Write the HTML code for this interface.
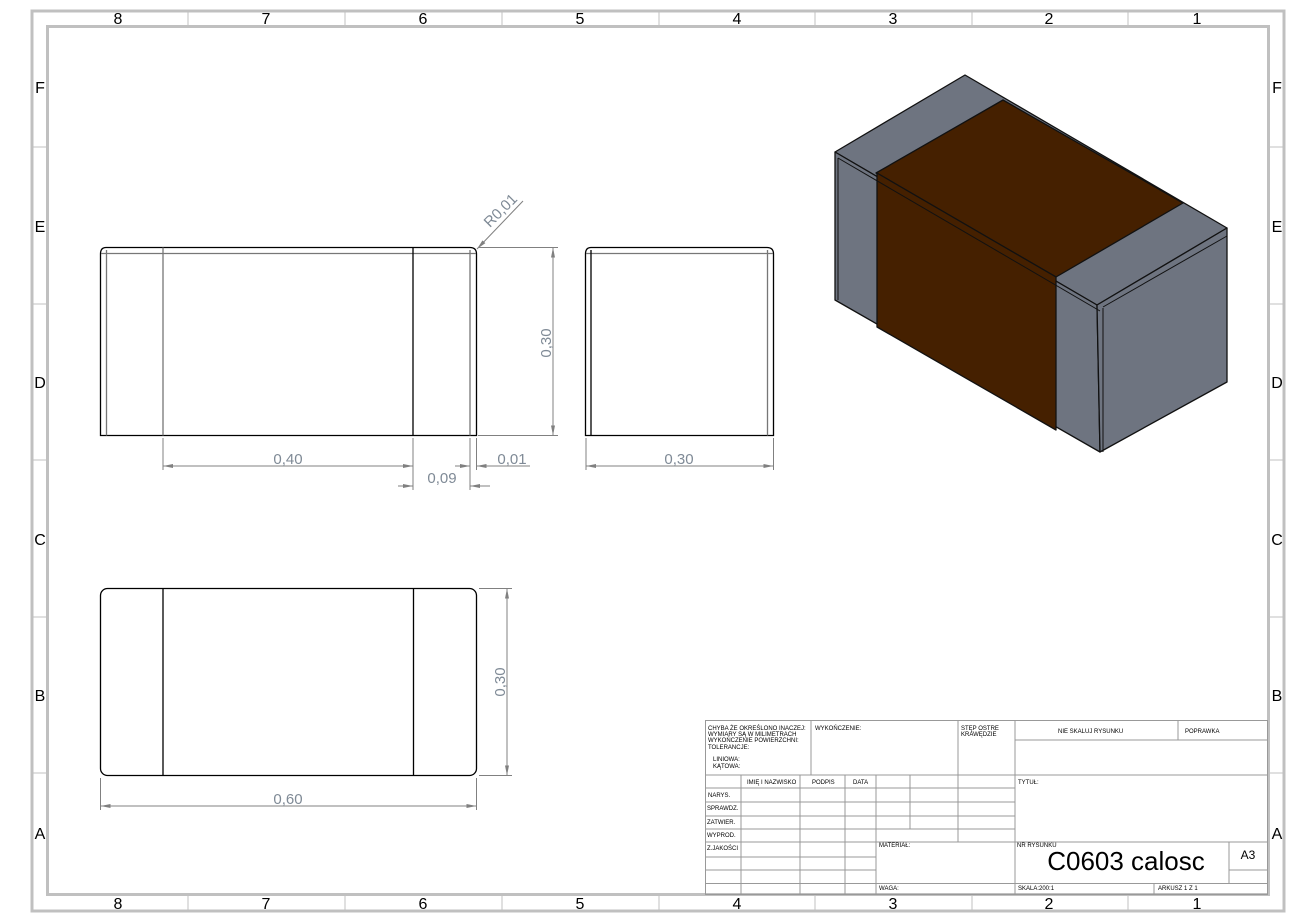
<!DOCTYPE html>
<html><head><meta charset="utf-8"><style>
html,body{margin:0;padding:0;background:#fff;}
svg{display:block;}
.b{stroke:#c0c0c0;fill:none}
.d{stroke:#808080;stroke-width:1;fill:none}
.k{stroke:#000;stroke-width:1.3;fill:none}
.g{stroke:#777;stroke-width:1.3;fill:none}
.dt{font-family:"Liberation Sans",sans-serif;font-size:15px;fill:#7f8a96;}
.z{font-family:"Liberation Sans",sans-serif;font-size:16px;fill:#000;}
.t{font-family:"Liberation Sans",sans-serif;font-size:6px;fill:#000;}
.tl{stroke:#999;stroke-width:1;fill:none}
</style></head><body>
<svg width="1295" height="921" viewBox="0 0 1295 921" xmlns="http://www.w3.org/2000/svg">
<defs>
<marker id="a" viewBox="0 0 10 4" refX="10" refY="2" markerWidth="12" markerHeight="4" markerUnits="userSpaceOnUse" orient="auto-start-reverse"><path d="M0,0 L10,2 L0,4z" fill="#808080"/></marker>
</defs>
<!-- borders -->
<rect x="32" y="11" width="1252" height="900" class="b" stroke-width="3"/>
<rect x="47.5" y="26.5" width="1221" height="868" class="b" stroke-width="3"/>
<g stroke="#c0c0c0" stroke-width="1">
<path d="M188,12V25M345,12V25M502,12V25M659,12V25M815,12V25M972,12V25M1128,12V25"/>
<path d="M188,896V910M345,896V910M502,896V910M659,896V910M815,896V910M972,896V910M1128,896V910"/>
<path d="M33,147H46M33,304H46M33,460H46M33,617H46M33,773H46"/>
<path d="M1270,147H1283M1270,304H1283M1270,460H1283M1270,617H1283M1270,773H1283"/>
</g>
<g class="z" text-anchor="middle">
<text x="118" y="24">8</text><text x="266" y="24">7</text><text x="423" y="24">6</text><text x="580" y="24">5</text><text x="737" y="24">4</text><text x="893" y="24">3</text><text x="1049" y="24">2</text><text x="1197" y="24">1</text>
<text x="118" y="909">8</text><text x="266" y="909">7</text><text x="423" y="909">6</text><text x="580" y="909">5</text><text x="737" y="909">4</text><text x="893" y="909">3</text><text x="1049" y="909">2</text><text x="1197" y="909">1</text>
<text x="40" y="93">F</text><text x="40" y="232">E</text><text x="40" y="388">D</text><text x="40" y="545">C</text><text x="40" y="701">B</text><text x="40" y="839">A</text>
<text x="1277" y="93">F</text><text x="1277" y="232">E</text><text x="1277" y="388">D</text><text x="1277" y="545">C</text><text x="1277" y="701">B</text><text x="1277" y="839">A</text>
</g>
<!-- front view -->
<path class="k" d="M106,247.5H470Q476.5,247.5 476.5,254V435.5H100.5V254Q100.5,247.5 106,247.5Z"/>
<path class="g" d="M101,253.5H476M106.5,250V435.5M470,250V435.5M163,247.5V435.5"/>
<path class="k" d="M413,247.5V435.5"/>
<!-- side view -->
<path class="k" d="M591,247.5H767Q773.5,247.5 773.5,254V435.5H585.5V254Q585.5,247.5 591,247.5Z"/>
<path class="g" d="M586,253.5H773M767.5,250V435.5"/>
<path class="k" d="M591,250V435.5"/>
<!-- bottom view -->
<rect x="100.5" y="588.5" width="376" height="187" rx="7" class="k"/>
<path class="k" d="M163,588.5V775.5M413.5,588.5V775.5"/>
<!-- dims -->
<path class="d" d="M163,438V470M413,438V490M470,438V490M476.5,438V470M586,438V470M773.5,438V470"/>
<path class="d" d="M163,466H413" marker-start="url(#a)" marker-end="url(#a)"/>
<path class="d" d="M400,486H413M470,486H490" />
<path class="d" d="M398,486H413" marker-end="url(#a)"/><path class="d" d="M485,486H470" marker-end="url(#a)"/>
<path class="d" d="M455,466H470" marker-end="url(#a)"/><path class="d" d="M530,466H476.5" marker-end="url(#a)"/>
<path class="d" d="M586,466H773.5" marker-start="url(#a)" marker-end="url(#a)"/>
<path class="d" d="M478,247.5H558M478,435.5H558"/>
<path class="d" d="M553,247.5V435.5" marker-start="url(#a)" marker-end="url(#a)"/>
<path class="d" d="M479,588.5H512M479,775.5H512"/>
<path class="d" d="M507,588.5V775.5" marker-start="url(#a)" marker-end="url(#a)"/>
<path class="d" d="M100.5,778V810M476.5,778V810"/>
<path class="d" d="M100.5,806H476.5" marker-start="url(#a)" marker-end="url(#a)"/>
<path class="d" d="M523,201L477,249" marker-end="url(#a)"/>
<g class="dt" text-anchor="middle">
<text x="288" y="464">0,40</text>
<text x="442" y="483">0,09</text>
<text x="512" y="464">0,01</text>
<text x="679" y="464">0,30</text>
<text x="288" y="804">0,60</text>
<text transform="translate(551,343) rotate(-90)">0,30</text>
<text transform="translate(505,682) rotate(-90)">0,30</text>
<text transform="translate(504,214) rotate(-45)">R0,01</text>
</g>
<!-- 3D -->
<g stroke="#111" stroke-width="1.3" stroke-linejoin="round">
<path d="M835,152L965,75L1227,228L1097,305Z" fill="#6e7480"/>
<path d="M835,152L1097,305L1100,452L835,300Z" fill="#6e7480"/>
<path d="M1097,305L1227,228L1227,382L1100,452Z" fill="#6e7480"/>
<path d="M876,173L1003,100L1183,203L1056,277Z" fill="#452000"/>
<path d="M877,173L1056,277L1056,430L877,327Z" fill="#452000"/>
</g>
<g stroke="#111" stroke-width="1" fill="none">
<path d="M838,158L1100,311M1103,307L1227,236M1103,308V452M838,158V300"/>
</g>
<!-- title block -->
<g class="tl">
<rect x="705.5" y="720.5" width="562" height="174"/>
<path d="M811,720.5V775M958,720.5V842M1015,720.5V895M1178,720.5V740M1015,740H1268M705.5,775H1268"/>
<path d="M705.5,788H1015M705.5,802H1015M705.5,816H1015M705.5,829H1015M705.5,842H1268M705.5,857H876M705.5,870H876M705.5,883.5H1268M1229,842V883.5M1229,870H1268M1154,883.5V895"/>
<path d="M741,775V895M800,775V895M845,775V895M876,775V895M910,775V829"/>
</g>
<g class="t">
<text x="708" y="730">CHYBA ŻE OKREŚLONO INACZEJ:</text>
<text x="708" y="736">WYMIARY SĄ W MILIMETRACH</text>
<text x="708" y="742">WYKOŃCZENIE POWIERZCHNI:</text>
<text x="708" y="749">TOLERANCJE:</text>
<text x="713" y="761">LINIOWA:</text>
<text x="713" y="768">KĄTOWA:</text>
<text x="815" y="730">WYKOŃCZENIE:</text>
<text x="961" y="730">STĘP OSTRE</text>
<text x="961" y="736">KRAWĘDZIE</text>
<text x="1058" y="733">NIE SKALUJ RYSUNKU</text>
<text x="1185" y="733">POPRAWKA</text>
<text x="747" y="784">IMIĘ I NAZWISKO</text>
<text x="812" y="784">PODPIS</text>
<text x="853" y="784">DATA</text>
<text x="708" y="797">NARYS.</text>
<text x="707" y="810">SPRAWDZ.</text>
<text x="707" y="824">ZATWIER.</text>
<text x="707" y="837">WYPROD.</text>
<text x="707" y="850">Z.JAKOŚCI</text>
<text x="1018" y="784">TYTUŁ:</text>
<text x="879" y="847">MATERIAŁ:</text>
<text x="1017" y="847">NR RYSUNKU</text>
<text x="879" y="890">WAGA:</text>
<text x="1018" y="890">SKALA:200:1</text>
<text x="1158" y="890">ARKUSZ 1 Z 1</text>
</g>
<text x="1126" y="870" text-anchor="middle" style="font-family:'Liberation Sans',sans-serif;font-size:26px;fill:#000">C0603 calosc</text>
<text x="1248" y="859" text-anchor="middle" style="font-family:'Liberation Sans',sans-serif;font-size:12px;fill:#000">A3</text>
</svg>
</body></html>
